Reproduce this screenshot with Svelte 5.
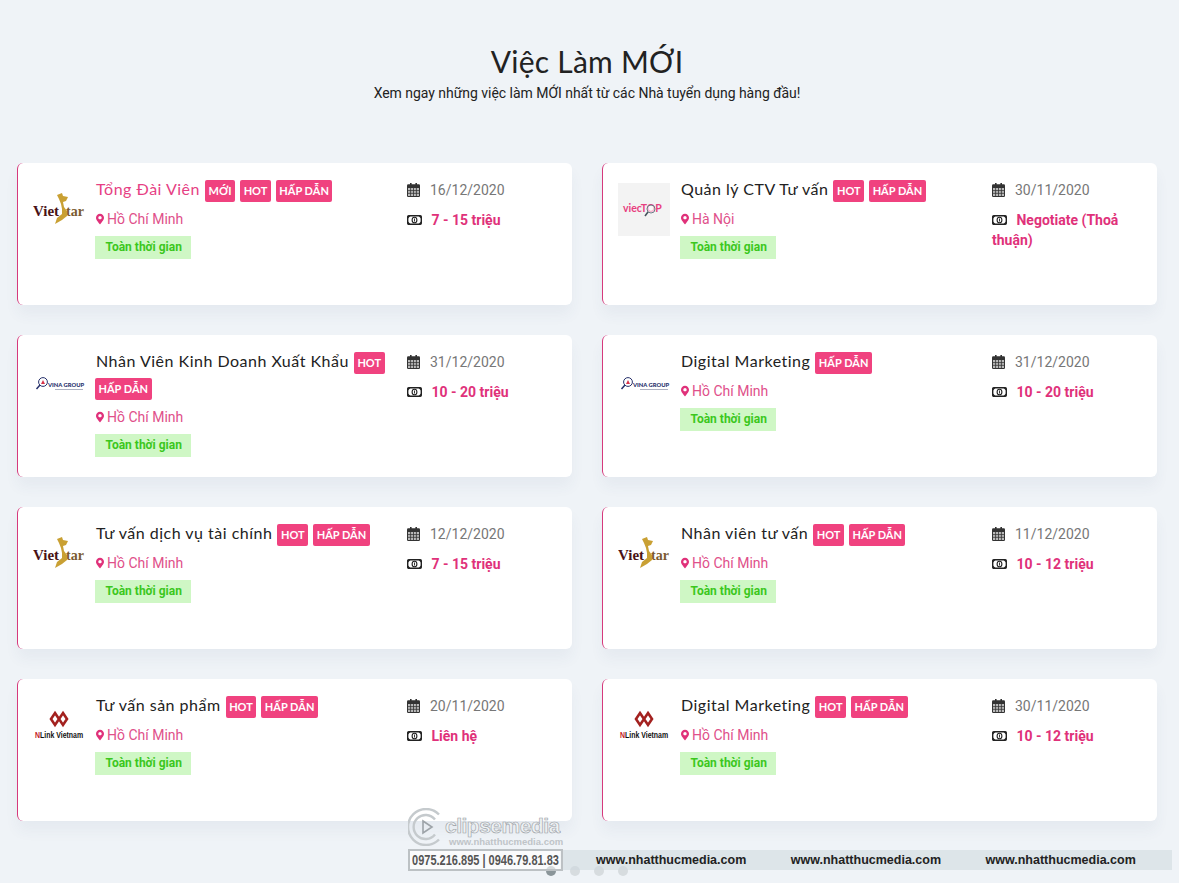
<script lang="ts">
	const jobs = [
		{ title: 'Tổng Đài Viên', badges: ['MỚI', 'HOT', 'HẤP DẪN'], city: 'Hồ Chí Minh', date: '16/12/2020', salary: '7 - 15 triệu', logo: 'vietstar', active: true },
		{ title: 'Quản lý CTV Tư vấn', badges: ['HOT', 'HẤP DẪN'], city: 'Hà Nội', date: '30/11/2020', salary: 'Negotiate (Thoả thuận)', logo: 'viectop' },
		{ title: 'Nhân Viên Kinh Doanh Xuất Khẩu', badges: ['HOT', 'HẤP DẪN'], city: 'Hồ Chí Minh', date: '31/12/2020', salary: '10 - 20 triệu', logo: 'vina' },
		{ title: 'Digital Marketing', badges: ['HẤP DẪN'], city: 'Hồ Chí Minh', date: '31/12/2020', salary: '10 - 20 triệu', logo: 'vina' },
		{ title: 'Tư vấn dịch vụ tài chính', badges: ['HOT', 'HẤP DẪN'], city: 'Hồ Chí Minh', date: '12/12/2020', salary: '7 - 15 triệu', logo: 'vietstar' },
		{ title: 'Nhân viên tư vấn', badges: ['HOT', 'HẤP DẪN'], city: 'Hồ Chí Minh', date: '11/12/2020', salary: '10 - 12 triệu', logo: 'vietstar' },
		{ title: 'Tư vấn sản phẩm', badges: ['HOT', 'HẤP DẪN'], city: 'Hồ Chí Minh', date: '20/11/2020', salary: 'Liên hệ', logo: 'nlink' },
		{ title: 'Digital Marketing', badges: ['HOT', 'HẤP DẪN'], city: 'Hồ Chí Minh', date: '30/11/2020', salary: '10 - 12 triệu', logo: 'nlink' }
	];
</script>

{#snippet logo(kind: string)}
	{#if kind === 'vietstar'}
		<svg class="logo" viewBox="0 0 52 53">
			<text x="0" y="33" class="vs-a">Viet</text>
			<text x="33" y="33" class="vs-b">tar</text>
			<path d="M24 12 L29 10 L30 13 L35 14 L33 18 L30 19 L31 24 L34 28 L34 33 L29 37 L22 41 L24 35 L29 31 L29 26 L28 21 L26 16 Z" fill="#c9a033" />
		</svg>
	{:else if kind === 'viectop'}
		<svg class="logo top-bg" viewBox="0 0 52 53">
			<text x="5" y="29" class="vt">viecTOP</text>
			<circle cx="33" cy="26" r="4" fill="#fff" fill-opacity=".6" stroke="#6b7a86" stroke-width="1" />
			<path d="M30 29 L27 33" stroke="#44525c" stroke-width="1.6" />
		</svg>
	{:else if kind === 'vina'}
		<svg class="logo" viewBox="0 0 52 53">
			<circle cx="10" cy="27" r="4.4" fill="#fff" stroke="#26306b" stroke-width="1" />
			<path d="M8 29 L10 25 L12 29 Z" fill="#d8324a" />
			<path d="M7 30 L3.5 34" stroke="#26306b" stroke-width="1.5" />
			<text x="15" y="32" class="vg">VINA GROUP</text>
			<path d="M22 34.5 H50" stroke="#8b90a8" stroke-width=".7" />
		</svg>
	{:else}
		<svg class="logo" viewBox="0 0 52 53">
			<path d="M22 12 L26 18 L22 24 L18 18 Z M30 12 L34 18 L30 24 L26 18 Z" transform="translate(0 2)" fill="none" stroke="#a3211f" stroke-width="2.6" />
			<text transform="translate(2 39) scale(.94 1.3)" class="nl"><tspan fill="#c3201f">N</tspan>Link Vietnam</text>
		</svg>
	{/if}
{/snippet}

<div class="page">
	<header>
		<h2>Việc Làm MỚI</h2>
		<p>Xem ngay những việc làm MỚI nhất từ các Nhà tuyển dụng hàng đầu!</p>
	</header>

	<div class="grid">
		{#each jobs as job}
			<article class="card">
				{@render logo(job.logo)}
				<div class="info">
					<div class="head">
						<span class="title" class:active={job.active}>{job.title}</span>
						{#each job.badges as b}
							<span class="badge">{b}</span>
						{/each}
					</div>
					<div class="city">
						<svg class="pin" viewBox="0 0 384 512"><path d="M172.268 501.67C26.97 291.031 0 268.413 0 192 0 85.961 85.961 0 192 0s192 85.961 192 192c0 76.413-26.97 99.031-172.268 309.67-9.535 13.774-29.93 13.773-39.464 0zM192 272c44.183 0 80-35.817 80-80s-35.817-80-80-80-80 35.817-80 80 35.817 80 80 80z" /></svg>
						{job.city}
					</div>
					<span class="tag">Toàn thời gian</span>
				</div>
				<div class="meta">
					<div class="date">
						<svg class="cal" viewBox="0 0 13 14">
							<path d="M3 0h1.6v2H3zM8.4 0H10v2H8.4z" fill="#333" />
							<rect y="1.2" width="13" height="12.8" rx="1.2" fill="#333" />
							<path d="M1 5h11v8H1z" fill="#bbb" />
							<path d="M3.6 5v8M6.5 5v8M9.4 5v8M1 7.6h11M1 10.3h11" stroke="#333" stroke-width=".8" />
						</svg>
						{job.date}
					</div>
					<div class="salary">
						<svg class="money" viewBox="0 0 15 10">
							<rect x=".7" y=".7" width="13.6" height="8.6" rx="1" fill="#fff" stroke="#222" stroke-width="1.4" />
							<path d="M1 1h2.4L1 3.4zM14 1h-2.4L14 3.4zM1 9h2.4L1 6.6zM14 9h-2.4L14 6.6z" fill="#222" />
							<ellipse cx="7.5" cy="5" rx="2.4" ry="2.8" fill="none" stroke="#222" stroke-width="1.1" />
							<path d="M7.1 3.6h.9v2.8h-.9z" fill="#222" />
						</svg>
						<span>{job.salary}</span>
					</div>
				</div>
			</article>
		{/each}
	</div>

	<div class="dots">
		<i class="on"></i><i></i><i></i><i></i>
	</div>

	<!-- watermark burned into the screenshot -->
	<div class="band">
		<span>www.nhatthucmedia.com</span>
		<span>www.nhatthucmedia.com</span>
		<span>www.nhatthucmedia.com</span>
	</div>
	<div class="mark">
		<div class="mark-top">
			<svg class="mark-c" viewBox="0 0 37 38">
				<path d="M31 6.5 A18 18 0 1 0 31 31.5" fill="none" stroke="#c5cacd" stroke-width="2.4" />
				<path d="M27 11.5 A12 12 0 1 0 27 26.5" fill="none" stroke="#c5cacd" stroke-width="2.4" />
				<path d="M15 13 L24 19 L15 25 Z" fill="none" stroke="#9da3a8" stroke-width="1.6" />
			</svg>
			<div>
				<div class="mark-name">clipsemedia</div>
				<div class="mark-url">www.nhatthucmedia.com</div>
			</div>
		</div>
		<div class="phone"><span>0975.216.895 | 0946.79.81.83</span></div>
	</div>
</div>

<style>
	:global(body) {
		background: #eff3f7;
		font-family: Roboto, sans-serif;
		overflow: hidden;
	}

	.page {
		position: relative;
		height: 883px;
		overflow: hidden;
		padding: 0 22px 0 17px;
		box-sizing: border-box;
	}

	header {
		text-align: center;
		padding-top: 42px;
		height: 163px;
		box-sizing: border-box;
	}

	h2 {
		margin: 0;
		font: 400 30px/38px Lato, sans-serif;
		letter-spacing: 0.25px;
		color: #222;
	}

	header p {
		margin: 3px 0 0;
		font-size: 14px;
		line-height: 20px;
		letter-spacing: -0.03px;
		color: #222;
	}

	.grid {
		display: grid;
		grid-template-columns: 1fr 1fr;
		gap: 30px;
	}

	.card {
		display: flex;
		height: 142px;
		box-sizing: border-box;
		padding: 17px 15px 0;
		background: #fff;
		border-left: 1px solid #d6397c;
		border-radius: 6px;
		box-shadow: 0 10px 14px rgba(60, 80, 110, 0.05);
	}

	.logo {
		flex: none;
		width: 52px;
		height: 53px;
		margin: 3px 10px 0 0;
	}

	.top-bg {
		background: #f3f3f3;
	}

	.vs-a,
	.vs-b {
		font: 700 15px "Liberation Serif", serif;
		fill: #4a1216;
	}

	.vs-b {
		font-size: 14px;
		fill: #7a5a30;
	}

	.vt {
		font: 700 10.5px Lato, sans-serif;
		fill: #e8407f;
	}

	.vg {
		font: 900 5.8px Lato, sans-serif;
		fill: #26306b;
	}

	.nl {
		font: 700 7.4px "Liberation Sans", sans-serif;
		fill: #111;
	}

	.info {
		flex: none;
		width: 312px;
		box-sizing: border-box;
	}

	.head {
		display: flex;
		flex-wrap: wrap;
		align-items: center;
		gap: 4px 5px;
		padding-right: 10px;
	}

	.title {
		margin-left: 1px;
		padding-bottom: 4px;
		font: 400 16px/18px Lato, sans-serif;
		letter-spacing: 0.5px;
		color: #222;
	}

	.title.active {
		color: #e63f84;
	}

	.badge {
		height: 22px;
		padding: 0 3.5px;
		background: #f0427f;
		border-radius: 2px;
		color: #fff;
		font: 700 11px/22px Lato, sans-serif;
	}

	.city {
		display: flex;
		align-items: center;
		gap: 3px;
		margin: 7px 0 7px 1px;
		font-size: 14px;
		line-height: 20px;
		color: #e0508a;
	}

	.pin {
		width: 8px;
		height: 12px;
		fill: #e0317a;
	}

	.tag {
		display: inline-block;
		height: 23px;
		padding: 0 9px 0 10.5px;
		background: #cff7c5;
		color: #3bc71d;
		font-size: 12px;
		font-weight: 700;
		line-height: 22px;
	}

	.meta {
		flex: 1;
		font-size: 14px;
		line-height: 20px;
	}

	.date {
		display: flex;
		align-items: center;
		gap: 10px;
		color: #777;
	}

	.cal {
		width: 13px;
		height: 14px;
	}

	.salary {
		margin-top: 10px;
		color: #e0317a;
		font-weight: 700;
	}

	.money {
		width: 15px;
		height: 10px;
		margin-right: 6px;
	}

	.dots {
		display: flex;
		gap: 14px;
		margin: 45px 0 0 529px;
	}

	.dots i {
		width: 10px;
		height: 10px;
		border-radius: 50%;
		background: #d7dcdf;
	}

	.dots i.on {
		background: #8a9599;
	}

	.band {
		position: absolute;
		left: 560px;
		top: 850px;
		width: 612px;
		height: 20px;
		display: flex;
		gap: 44.5px;
		padding-left: 36px;
		box-sizing: border-box;
		background: rgba(205, 216, 222, 0.55);
		font: 700 12.5px/20px "Liberation Sans", sans-serif;
		color: #222;
	}

	.mark {
		position: absolute;
		left: 408px;
		top: 808px;
		width: 155px;
	}

	.mark-top {
		display: flex;
		height: 41px;
	}

	.mark-c {
		flex: none;
		width: 37px;
		height: 38px;
	}

	.mark-name {
		margin-top: 8px;
		font: 700 21px/20px "Liberation Sans", sans-serif;
		letter-spacing: -0.5px;
		white-space: nowrap;
		color: #eef1f3;
		-webkit-text-stroke: 0.6px #9aa0a5;
	}

	.mark-url {
		margin: 1px 0 0 4px;
		font: 700 9.5px/10px "Liberation Sans", sans-serif;
		white-space: nowrap;
		color: #bfc4c8;
	}

	.phone {
		height: 22px;
		box-sizing: border-box;
		border: 2px solid #bcc1c4;
		background: rgba(255, 255, 255, 0.65);
		font: 700 11px/18px "Liberation Sans", sans-serif;
		text-align: center;
		white-space: nowrap;
		color: #555;
	}

	.phone span {
		display: inline-block;
		transform: scaleY(1.25);
	}
</style>
